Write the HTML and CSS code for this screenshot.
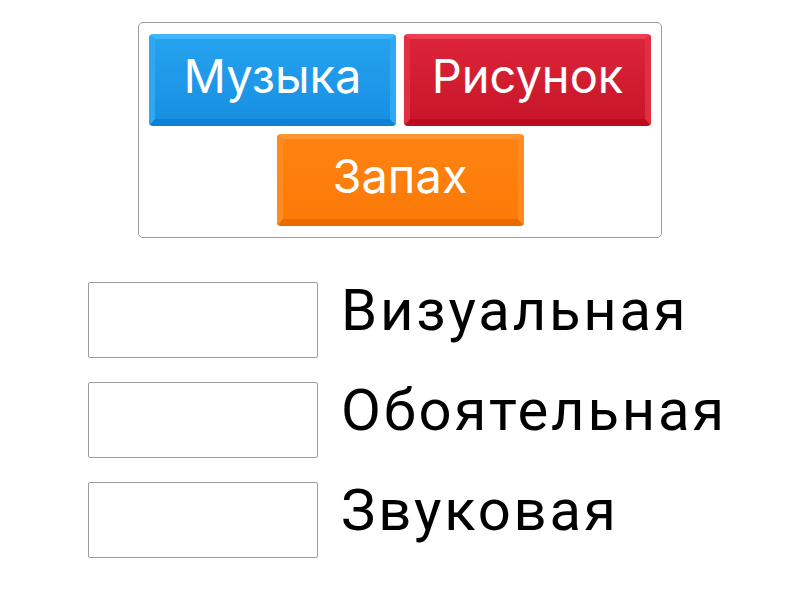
FILE: index.html
```html
<!DOCTYPE html>
<html lang="ru">
<head>
<meta charset="utf-8">
<link rel="stylesheet" href="styles.css">
</head>
<body>
<div class="page">
  <div class="bank">
    <div class="tile tile-blue">Музыка</div>
    <div class="tile tile-red">Рисунок</div>
    <div class="tile tile-orange">Запах</div>
  </div>
  <div class="rows">
    <div class="row"><div class="slot"></div><div class="label">Визуальная</div></div>
    <div class="row"><div class="slot"></div><div class="label">Обоятельная</div></div>
    <div class="row"><div class="slot"></div><div class="label">Звуковая</div></div>
  </div>
</div>
</body>
</html>
```

FILE: styles.css
```css
html, body {
  margin: 0;
  padding: 0;
  background: #ffffff;
}
.page {
  width: 800px;
  height: 600px;
  padding-top: 22px;
  box-sizing: border-box;
}
.bank {
  width: 524px;
  height: 216px;
  margin-left: 138px;
  box-sizing: border-box;
  border: 1px solid #9c9c9c;
  border-radius: 5px;
  padding: 11px 10px 10px 10px;
  display: flex;
  flex-wrap: wrap;
  justify-content: center;
  align-content: flex-start;
  gap: 8px 8px;
}
.tile {
  width: 247px;
  height: 92px;
  box-sizing: border-box;
  border-radius: 4px;
  border-style: solid;
  border-width: 5px 6px 7px 6px;
  display: flex;
  align-items: center;
  justify-content: center;
  color: #ffffff;
  font-family: Inter, "Noto Sans", sans-serif;
  font-size: 47px;
  font-weight: 400;
  letter-spacing: 0;
  padding-bottom: 8px;
}
.tile-blue {
  background: linear-gradient(#25a2ee, #1890e2);
  border-color: #42b6fc #2ea8f2 #0d82d4 #2ea8f2;
}
.tile-red {
  background: linear-gradient(#dc2439, #c91629);
  border-color: #ef3d52 #e02e42 #bd0b1d #e02e42;
}
.tile-orange {
  background: linear-gradient(#ff8312, #fb7a08);
  border-color: #ff952e #ff8a1e #e86a00 #ff8a1e;
}
.rows {
  margin-top: 44px;
  margin-left: 88px;
  display: flex;
  flex-direction: column;
  gap: 24px;
}
.row {
  display: flex;
  align-items: center;
  gap: 23px;
}
.slot {
  width: 230px;
  height: 76px;
  box-sizing: border-box;
  border: 1px solid #9c9c9c;
  border-radius: 2px;
}
.label {
  font-family: Roboto, "Liberation Sans", sans-serif;
  font-size: 58px;
  letter-spacing: 2.8px;
  color: #000000;
  line-height: 76px;
  margin-top: -20px;
}
```
